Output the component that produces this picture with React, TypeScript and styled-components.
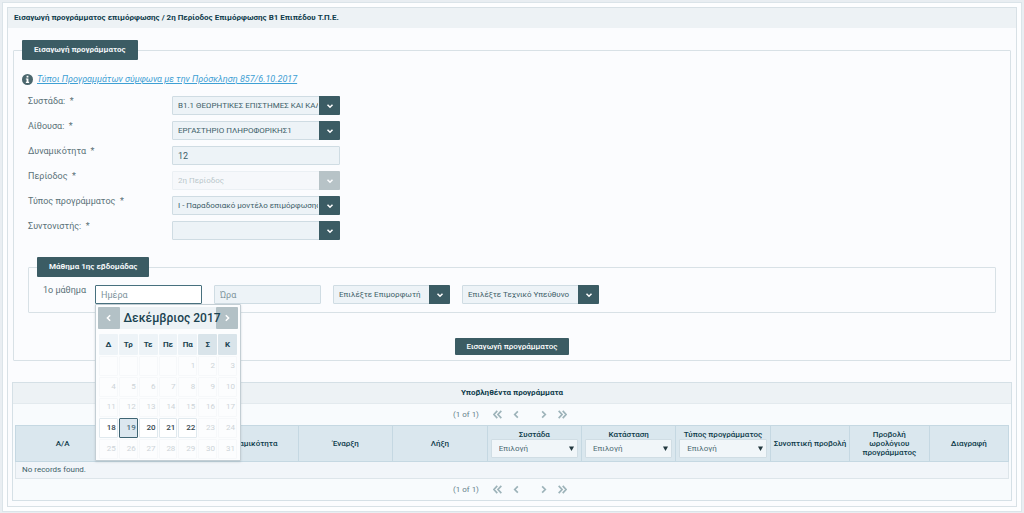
import React from "react";
import styled, { createGlobalStyle, css } from "styled-components";

const GlobalStyle = createGlobalStyle`
  * { box-sizing: border-box; }
  body {
    margin: 0;
    padding: 2px 2px 3px;
    background: #e9eef2;
    color: #4c6a72;
    font: 8px/12px Roboto, "Open Sans", sans-serif;
  }
  button, input, select { font: inherit; color: inherit; margin: 0; }
`;

const Page = styled.main`
  padding: 4px;
  background: #fdfeff;
  border: 1px solid #dbe4e9;
`;

const Panel = styled.section`
  padding-bottom: 5px;
  border: 1px solid #d8e1e6;
  background: #fbfcfe;
`;

const PanelTitle = styled.h1`
  margin: 0;
  padding: 4px 6px;
  background: #edf2f5;
  color: #0f3c4b;
  font-size: 8px;
  line-height: 12px;
  font-weight: 700;
`;

const Group = styled.fieldset<{ $inner?: boolean }>`
  min-width: 0;
  margin: ${(p) => (p.$inner ? "17px 14px 0" : "12px 5px 0")};
  padding: ${(p) => (p.$inner ? "8px 0 8px" : "0 0 5px")};
  border: 1px solid #d8e1e6;
  border-radius: 1px;
`;

const Legend = styled.legend`
  margin-left: 8px;
  padding: 4px 12px;
  border-radius: 1px;
  background: #3b5c64;
  color: #f3f7f9;
  font-weight: 700;
`;

const InfoRow = styled.div`
  display: flex;
  align-items: center;
  gap: 4px;
  height: 12px;
  margin: 13px 0 11px 8px;
`;

const InfoLink = styled.a`
  color: #3ea0d4;
  font-size: 9px;
  font-style: italic;
`;

const Fields = styled.div`
  display: grid;
  grid-template-columns: 144px 168px;
  row-gap: 6px;
  margin-left: 14px;
`;

const FieldLabel = styled.label`
  white-space: pre;
  color: #5a7178;
  font-size: 9px;
  line-height: 11px;
`;

const boxStyle = css`
  height: 19px;
  padding: 0 5px;
  border: 1px solid #cfdce3;
  border-radius: 1px;
  background: #edf3f7;
  color: #3d5f69;
`;

const TextInput = styled.input<{ $active?: boolean }>`
  ${boxStyle}
  width: 100%;
  outline: none;
  font-size: 9px;
  &::placeholder { color: #7e939b; opacity: 1; }
  ${(p) => p.$active && "border-color: #47707e; background: #fff;"}
`;

const DropBox = styled.div<{ $disabled?: boolean }>`
  display: flex;
  position: relative;
  opacity: ${(p) => (p.$disabled ? 0.35 : 1)};
`;

const DropSelect = styled.select`
  ${boxStyle}
  width: 100%;
  padding: 0 21px 0 5px;
  appearance: none;
  outline: none;
  opacity: 1;
`;

const DropArrow = styled.span`
  position: absolute;
  inset: 0 0 0 auto;
  display: flex;
  align-items: center;
  justify-content: center;
  width: 21px;
  border-radius: 0 1px 1px 0;
  background: #3b5c64;
  color: #fff;
  pointer-events: none;
`;

const Lesson = styled.div`
  display: grid;
  grid-template-columns: 40px 107px 107px 117px 137px;
  column-gap: 12px;
  padding-left: 14px;
`;

const DayField = styled.div`
  position: relative;
`;

const Actions = styled.div`
  display: flex;
  justify-content: center;
  margin-top: 25px;
`;

const Submit = styled.button`
  height: 17px;
  padding: 0 11px;
  border: 0;
  border-radius: 1px;
  background: #3b5c64;
  color: #fff;
  font-weight: 500;
`;

const Picker = styled.div`
  position: absolute;
  z-index: 2;
  top: 19px;
  left: 0;
  width: 146px;
  padding: 2px 2px 0;
  border: 1px solid #c3ced4;
  border-radius: 1px;
  background: #fcfdfe;
  box-shadow: 0 1px 2px #9aa8af80;
`;

const PickerHead = styled.div`
  display: flex;
  justify-content: space-between;
  position: relative;
  height: 22px;
  background: #edf2f5;
`;

const PickerTitle = styled.div`
  position: absolute;
  inset: 0 0 0 8px;
  color: #1a4250;
  font-size: 12px;
  line-height: 22px;
  font-weight: 500;
  text-align: center;
  white-space: nowrap;
`;

const PickerNav = styled.button`
  display: flex;
  align-items: center;
  justify-content: center;
  width: 22px;
  padding: 0;
  border: 0;
  border-radius: 1px;
  background: #b3c1c6;
  color: #fff;
`;

const Days = styled.table`
  width: 100%;
  height: 127px;
  margin-top: 4px;
  table-layout: fixed;
  border-spacing: 1px;
`;

const Weekday = styled.th<{ $weekend: boolean }>`
  height: 21px;
  padding: 0;
  border-radius: 1px;
  background: ${(p) => (p.$weekend ? "#d9e4ea" : "#edf3f7")};
  color: #1a4250;
  font-weight: 700;
`;

const Day = styled.td<{ $state: "off" | "on" | "today" }>`
  padding: 0 1px 0 0;
  border: 1px solid #f6f8fa;
  border-radius: 1px;
  text-align: right;
  color: #cdd4d8;
  ${(p) => p.$state === "on" && "border-color: #e0e9ee; color: #34474e; background: #fff; font-weight: 500;"}
  ${(p) => p.$state === "today" && "border-color: #3d6473; color: #4c6f7d; background: #dbe7ef; font-weight: 500;"}
`;

const Submitted = styled.section`
  margin: 21px 4px 0;
  padding: 0 2px;
  border: 1px solid #d5e0e6;
  background: #f8fbfd;
`;

const SubmittedTitle = styled.h2`
  margin: 0 -2px;
  padding: 4px;
  border-bottom: 1px solid #e3eaee;
  background: #edf2f5;
  color: #0f3c4b;
  font-size: 8px;
  line-height: 12px;
  font-weight: 700;
  text-align: center;
`;

const Pager = styled.nav`
  display: flex;
  align-items: center;
  justify-content: center;
  height: 21px;
  color: #64808a;
  font-size: 8px;
`;

const PagerButton = styled.button<{ $gap?: boolean }>`
  display: flex;
  padding: 0 4px;
  margin-left: ${(p) => (p.$gap ? "10px" : "2px")};
  border: 0;
  background: none;
  color: #9db3b9;
`;

const PagerText = styled.span`
  margin-right: 8px;
`;

const Grid = styled.table`
  width: 100%;
  table-layout: fixed;
  border-collapse: collapse;
`;

const HeadCell = styled.th<{ $narrow?: boolean }>`
  width: ${(p) => (p.$narrow ? "8%" : "auto")};
  height: 36px;
  padding: 0 ${(p) => (p.$narrow ? "1px" : "3px")};
  border: 1px solid #c5d8e2;
  background: #dae7ee;
  color: #0f3c4b;
  line-height: 9px;
  font-weight: 500;
  white-space: pre-line;
`;

const EmptyCell = styled.td`
  height: 17px;
  padding: 0 6px;
  border: 1px solid #dde5ea;
  background: #f1f5f9;
  color: #3d5f69;
`;

const FilterBox = styled.div`
  display: flex;
  position: relative;
`;

const FilterSelect = styled.select`
  width: 100%;
  height: 19px;
  padding: 0 7px;
  border: 1px solid #d0dde4;
  border-radius: 1px;
  appearance: none;
  background: #f1f6f9;
  color: #4c6a72;
  font-weight: 400;
`;

const FilterArrow = styled.span`
  position: absolute;
  inset: 0 4px 0 auto;
  display: flex;
  align-items: center;
  pointer-events: none;
`;

const Chevron = ({ d, size = 8 }: { d: string; size?: number }) => (
  <svg width={size} height={size} viewBox="0 0 8 8" fill="none" stroke="currentColor" strokeWidth="1.5" aria-hidden>
    <path d={d} />
  </svg>
);

const DOWN = "M1.5 2.7 4 5.2 6.5 2.7";
const LEFT = "M5.2 1.2 2.4 4 5.2 6.8";
const RIGHT = "M2.8 1.2 5.6 4 2.8 6.8";
const FIRST = "M3.8 .8 .8 4 3.8 7.2M7.4 .8 4.4 4 7.4 7.2";
const LAST = "M.6 .8 3.6 4 .6 7.2M4.2 .8 7.2 4 4.2 7.2";

type DropProps = { id?: string; value: string; disabled?: boolean; label?: string };

const Drop = ({ id, value, disabled, label }: DropProps) => (
  <DropBox $disabled={disabled}>
    <DropSelect id={id} disabled={disabled} aria-label={label}>
      <option>{value}</option>
    </DropSelect>
    <DropArrow><Chevron d={DOWN} /></DropArrow>
  </DropBox>
);

const WEEKDAYS = ["Δ", "Τρ", "Τε", "Πε", "Πα", "Σ", "Κ"];
const WEEKS = [0, 1, 2, 3, 4].map((w) => WEEKDAYS.map((_, d) => w * 7 + d - 3));

const dayState = (n: number) => (n === 19 ? "today" : n >= 18 && n <= 22 ? "on" : "off");

const Calendar = () => (
  <Picker>
    <PickerHead>
      <PickerNav type="button" aria-label="Προηγούμενος"><Chevron d={LEFT} /></PickerNav>
      <PickerNav type="button" aria-label="Επόμενος"><Chevron d={RIGHT} /></PickerNav>
      <PickerTitle>Δεκέμβριος 2017</PickerTitle>
    </PickerHead>
    <Days>
      <thead>
        <tr>{WEEKDAYS.map((d, i) => <Weekday key={d} $weekend={i > 4}>{d}</Weekday>)}</tr>
      </thead>
      <tbody>
        {WEEKS.map((week) => (
          <tr key={week[0]}>
            {week.map((n) => <Day key={n} $state={dayState(n)}>{n > 0 ? n : ""}</Day>)}
          </tr>
        ))}
      </tbody>
    </Days>
  </Picker>
);

const Paginator = () => (
  <Pager>
    <PagerText>(1 of 1)</PagerText>
    <PagerButton type="button" aria-label="First"><Chevron d={FIRST} size={9} /></PagerButton>
    <PagerButton type="button" aria-label="Previous"><Chevron d={LEFT} size={9} /></PagerButton>
    <PagerButton type="button" aria-label="Next" $gap><Chevron d={RIGHT} size={9} /></PagerButton>
    <PagerButton type="button" aria-label="Last"><Chevron d={LAST} size={9} /></PagerButton>
  </Pager>
);

const COLUMNS: { title: string; filter?: boolean; narrow?: boolean }[] = [
  { title: "Α/Α" },
  { title: "" },
  { title: "Δυναμικότητα" },
  { title: "Έναρξη" },
  { title: "Λήξη" },
  { title: "Συστάδα", filter: true },
  { title: "Κατάσταση", filter: true },
  { title: "Τύπος προγράμματος", filter: true },
  { title: "Συνοπτική προβολή", narrow: true },
  { title: "Προβολή\nωρολόγιου\nπρογράμματος", narrow: true },
  { title: "Διαγραφή", narrow: true },
];

export default function App() {
  return (
    <>
      <GlobalStyle />
      <Page>
        <Panel>
          <PanelTitle>Εισαγωγή προγράμματος επιμόρφωσης / 2η Περίοδος Επιμόρφωσης Β1 Επιπέδου Τ.Π.Ε.</PanelTitle>
          <Group>
            <Legend>Εισαγωγή προγράμματος</Legend>
            <InfoRow>
              <svg width="11" height="11" viewBox="0 0 12 12" aria-hidden>
                <circle cx="6" cy="6" r="6" fill="#4a666d" />
                <path d="M5 2h2v1.7H5zM4.2 4.8H7v3.6h.8v1.3H4.2V8.400h.8V6.100h-.8z" fill="#fff" />
              </svg>
              <InfoLink href="#">Τύποι Προγραμμάτων σύμφωνα με την Πρόσκληση 857/6.10.2017</InfoLink>
            </InfoRow>
            <Fields>
              <FieldLabel htmlFor="cluster">Συστάδα:  *</FieldLabel>
              <Drop id="cluster" value="Β1.1 ΘΕΩΡΗΤΙΚΕΣ ΕΠΙΣΤΗΜΕΣ ΚΑΙ ΚΑΛΛΙΤΕΧΝΙΚΑ" />
              <FieldLabel htmlFor="room">Αίθουσα:  *</FieldLabel>
              <Drop id="room" value="ΕΡΓΑΣΤΗΡΙΟ ΠΛΗΡΟΦΟΡΙΚΗΣ1" />
              <FieldLabel htmlFor="capacity">Δυναμικότητα  *</FieldLabel>
              <TextInput id="capacity" defaultValue="12" />
              <FieldLabel htmlFor="period">Περίοδος  *</FieldLabel>
              <Drop id="period" value="2η Περίοδος" disabled />
              <FieldLabel htmlFor="type">Τύπος προγράμματος  *</FieldLabel>
              <Drop id="type" value="Ι - Παραδοσιακό μοντέλο επιμόρφωσης" />
              <FieldLabel htmlFor="coordinator">Συντονιστής:  *</FieldLabel>
              <Drop id="coordinator" value="" />
            </Fields>
            <Group $inner>
              <Legend>Μάθημα 1ης εβδομάδας</Legend>
              <Lesson>
                <FieldLabel htmlFor="day">1ο μάθημα</FieldLabel>
                <DayField>
                  <TextInput id="day" placeholder="Ημέρα" $active />
                  <Calendar />
                </DayField>
                <TextInput placeholder="Ώρα" aria-label="Ώρα" />
                <Drop value="Επιλέξτε Επιμορφωτή" label="Επιμορφωτής" />
                <Drop value="Επιλέξτε Τεχνικό Υπεύθυνο" label="Τεχνικός Υπεύθυνος" />
              </Lesson>
            </Group>
            <Actions>
              <Submit type="button">Εισαγωγή προγράμματος</Submit>
            </Actions>
          </Group>
          <Submitted>
            <SubmittedTitle>Υποβληθέντα προγράμματα</SubmittedTitle>
            <Paginator />
            <Grid>
              <thead>
                <tr>
                  {COLUMNS.map((c, i) => (
                    <HeadCell key={i} $narrow={c.narrow}>
                      {c.title}
                      {c.filter && (
                        <FilterBox>
                          <FilterSelect aria-label={c.title}><option>Επιλογή</option></FilterSelect>
                          <FilterArrow>
                            <svg width="5" height="5" viewBox="0 0 5 5" aria-hidden><path d="M0 .5h5L2.500 5z" fill="#22383f" /></svg>
                          </FilterArrow>
                        </FilterBox>
                      )}
                    </HeadCell>
                  ))}
                </tr>
              </thead>
              <tbody>
                <tr><EmptyCell colSpan={11}>No records found.</EmptyCell></tr>
              </tbody>
            </Grid>
            <Paginator />
          </Submitted>
        </Panel>
      </Page>
    </>
  );
}
